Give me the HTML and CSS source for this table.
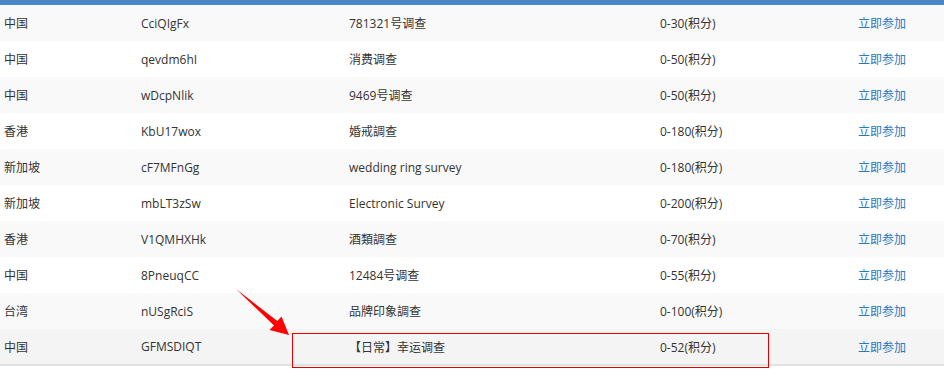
FILE: index.html
```html
<!DOCTYPE html>
<html>
<head>
<meta charset="utf-8">
<link rel="stylesheet" href="styles.css">
</head>
<body>
<div class="page">
  <div class="topbar"></div>
  <div class="list">
    <div class="row"><span>中国</span><span>CciQIgFx</span><span>781321号调查</span><span>0-30(积分)</span><a class="join">立即参加</a></div>
    <div class="row"><span>中国</span><span>qevdm6hI</span><span>消费调查</span><span>0-50(积分)</span><a class="join">立即参加</a></div>
    <div class="row"><span>中国</span><span>wDcpNlik</span><span>9469号调查</span><span>0-50(积分)</span><a class="join">立即参加</a></div>
    <div class="row"><span>香港</span><span>KbU17wox</span><span>婚戒調查</span><span>0-180(积分)</span><a class="join">立即参加</a></div>
    <div class="row"><span>新加坡</span><span>cF7MFnGg</span><span>wedding ring survey</span><span>0-180(积分)</span><a class="join">立即参加</a></div>
    <div class="row"><span>新加坡</span><span>mbLT3zSw</span><span>Electronic Survey</span><span>0-200(积分)</span><a class="join">立即参加</a></div>
    <div class="row"><span>香港</span><span>V1QMHXHk</span><span>酒類調查</span><span>0-70(积分)</span><a class="join">立即参加</a></div>
    <div class="row"><span>中国</span><span>8PneuqCC</span><span>12484号调查</span><span>0-55(积分)</span><a class="join">立即参加</a></div>
    <div class="row"><span>台湾</span><span>nUSgRciS</span><span>品牌印象調查</span><span>0-100(积分)</span><a class="join">立即参加</a></div>
    <div class="row last"><span>中国</span><span>GFMSDIQT</span><span>【日常】幸运调查</span><span>0-52(积分)</span><a class="join">立即参加</a></div>
  </div>
  <div class="highlight"></div>
  <svg class="arrow" width="944" height="390" viewBox="0 0 944 390">
    <polygon points="236,289 274,325.5 269.5,330 289,335 281.5,316.5 277.3,321" fill="#ff0000"/>
  </svg>
</div>
</body>
</html>
```
FILE: styles.css
```css
html, body {
  margin: 0;
  padding: 0;
  background: #ffffff;
}
.page {
  position: relative;
  width: 944px;
  height: 390px;
  overflow: hidden;
  font-family: "Open Sans", "Noto Sans CJK SC", sans-serif;
  font-size: 12px;
  color: #333333;
}
.topbar {
  height: 5px;
  background: #4a86c8;
}
.list {
  border-bottom: 2px solid #e2e2e2;
}
.row {
  display: grid;
  grid-template-columns: 137px 208px 311px 198px 1fr;
  align-items: center;
  height: 36px;
  padding-left: 4px;
  background: #ffffff;
}
.row:nth-child(odd) {
  background: #f9f9f9;
}
.row.last {
  background: #f4f4f4;
  height: 35px;
}
.join {
  color: #2a78c2;
}
.highlight {
  position: absolute;
  left: 292px;
  top: 333px;
  width: 475px;
  height: 33px;
  border: 1px solid #e60000;
}
.arrow {
  position: absolute;
  left: 0;
  top: 0;
}
```
